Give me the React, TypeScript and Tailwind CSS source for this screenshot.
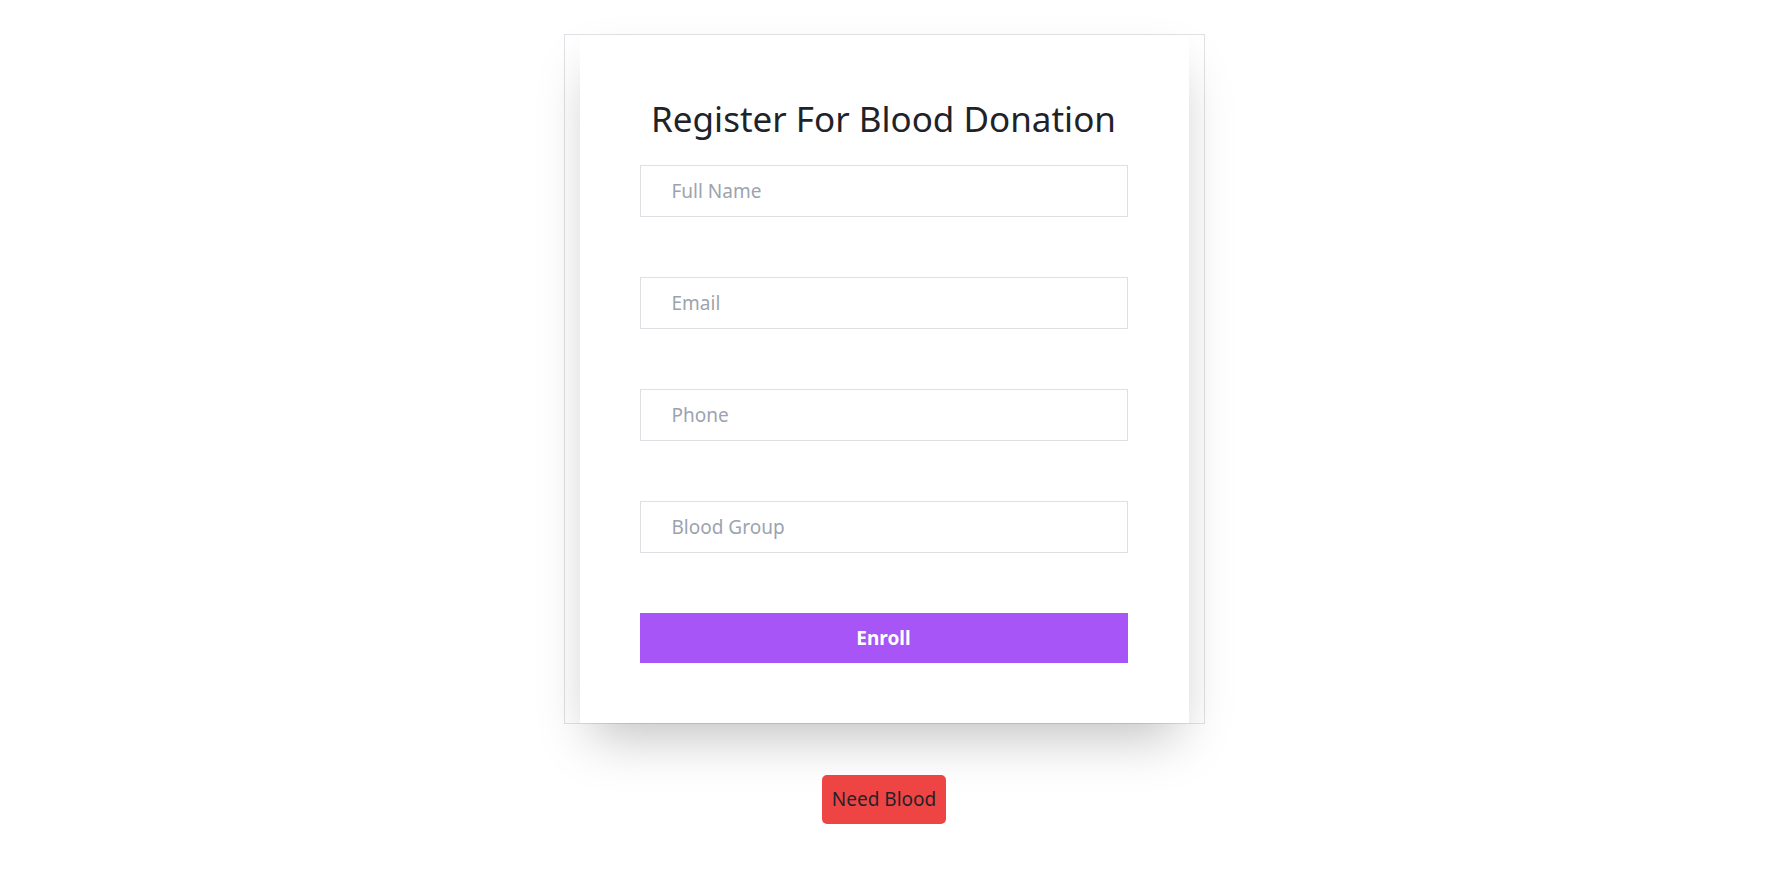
import React from 'react';

const fields = ['Full Name', 'Email', 'Phone', 'Blood Group'];

const App = () => {
  return (
    <div
      className="min-h-screen bg-white flex flex-col items-center pt-[34px] pr-[10px]"
      style={{ fontFamily: '"Noto Sans", "Open Sans", sans-serif' }}
    >
      <div className="w-[641px] border border-[#e1e1e6] px-[15px]">
        <div className="bg-white shadow-2xl pl-[60px] pr-[61px] pt-[63px] pb-[60px]">
          <h1 className="text-center text-[#1f2329] text-[35px] leading-[1.2] mb-[25px]">
            Register For Blood Donation
          </h1>
          <form className="flex flex-col gap-[60px]" onSubmit={(e) => e.preventDefault()}>
            {fields.map((f) => (
              <input
                key={f}
                type="text"
                placeholder={f}
                className="h-[52px] w-full border border-[#dedee3] px-[31px] text-[19px] text-gray-800 placeholder:text-[#9ca3af] outline-none"
              />
            ))}
            <button
              type="submit"
              className="h-[50px] w-full bg-[#a855f7] text-white font-bold text-[19px]"
            >
              Enroll
            </button>
          </form>
        </div>
      </div>
      <button className="mt-[51px] h-[49px] px-[10px] rounded-[5px] bg-[#ef4444] text-[#1f2329] text-[19px]">
        Need Blood
      </button>
    </div>
  );
};

export default App;
